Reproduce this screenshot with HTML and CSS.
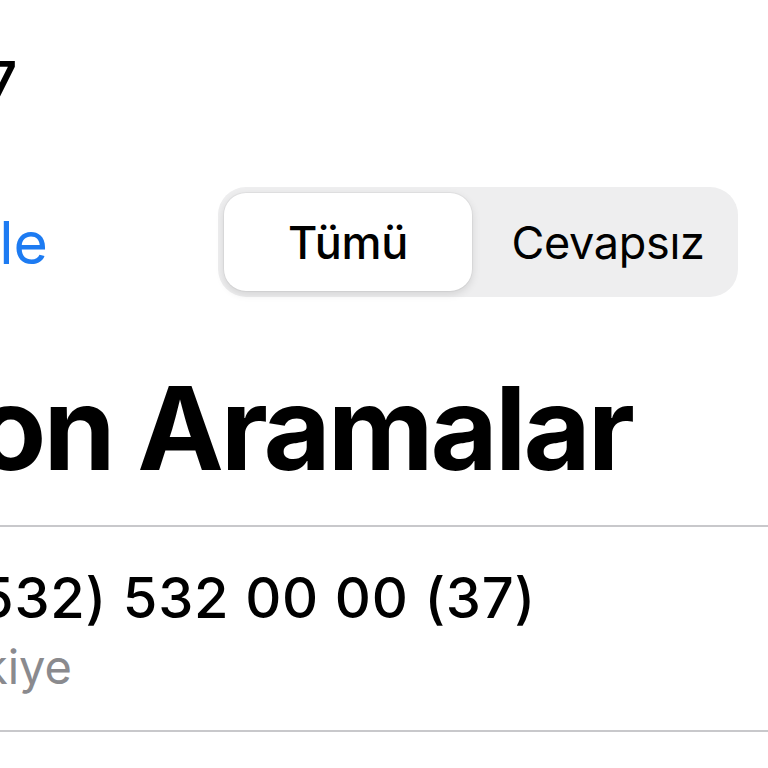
FILE: index.html
```html
<!DOCTYPE html>
<html lang="tr">
<head>
<meta charset="utf-8">
<title>Son Aramalar</title>
<link rel="stylesheet" href="styles.css">
</head>
<body>
<div class="screen">
  <div class="status">
    <div class="clip-row status-time"><span>14:37</span></div>
  </div>
  <div class="navbar">
    <div class="clip-row edit"><span>Düzenle</span></div>
    <div class="segmented">
      <div class="segment is-selected"><span>Tümü</span></div>
      <div class="segment"><span>Cevapsız</span></div>
    </div>
  </div>
  <h1 class="clip-row title"><span>Son Aramalar</span></h1>
  <ul class="calls">
    <li class="call">
      <div class="clip-row call-number"><span>+90 (532) 532 00 00 (37)</span></div>
      <div class="clip-row call-label"><span>Türkiye</span></div>
    </li>
  </ul>
</div>
</body>
</html>
```

FILE: styles.css
```css
* {
  box-sizing: border-box;
  margin: 0;
  padding: 0;
}

body {
  background: #ffffff;
  color: #000000;
  font-family: Inter, "Liberation Sans", sans-serif;
}

.screen {
  width: 768px;
  height: 768px;
  overflow: hidden;
}

/* Rows whose text is anchored at its right end and runs off the left edge */
.clip-row {
  display: flex;
  justify-content: flex-end;
  white-space: nowrap;
}

/* Status bar */
.status {
  height: 187px;
  padding-top: 55px;
}

.status-time {
  width: 17px;
  font-size: 52px;
  line-height: 52px;
  font-weight: 600;
}

/* Navigation bar */
.navbar {
  display: flex;
  align-items: center;
  height: 110px;
}

.edit {
  width: 48px;
  font-size: 59px;
  line-height: 59px;
  color: #1d7bf2;
}

.segmented {
  margin-left: auto;
  margin-right: 30px;
  width: 520px;
  height: 110px;
  display: grid;
  grid-template-columns: 1fr 1fr;
  background: #eeeeef;
  border-radius: 28px;
}

.segment {
  display: flex;
  align-items: center;
  justify-content: center;
  font-size: 45px;
  font-weight: 400;
  color: #000000;
  letter-spacing: -0.3px;
}

.segment.is-selected {
  margin: 6px;
  background: #ffffff;
  border-radius: 22px;
  font-weight: 500;
  box-shadow: 0 3px 8px rgba(0, 0, 0, 0.12), 0 0 0 1px rgba(0, 0, 0, 0.04);
}

/* Large title */
.title {
  width: 632px;
  margin-top: 73px;
  margin-bottom: 39px;
  font-size: 116px;
  line-height: 116px;
  font-weight: 700;
  letter-spacing: -3px;
}

/* Recent calls list */
.calls {
  list-style: none;
  border-top: 2px solid #c8c8cb;
}

.call {
  padding: 43px 0 40px;
  border-bottom: 2px solid #c8c8cb;
}

.call-number {
  width: 536px;
  font-size: 56px;
  line-height: 56px;
  font-weight: 500;
  letter-spacing: 0.8px;
}

.call-label {
  width: 72px;
  margin-top: 17px;
  font-size: 47px;
  line-height: 47px;
  color: #8a8a8e;
}
```
